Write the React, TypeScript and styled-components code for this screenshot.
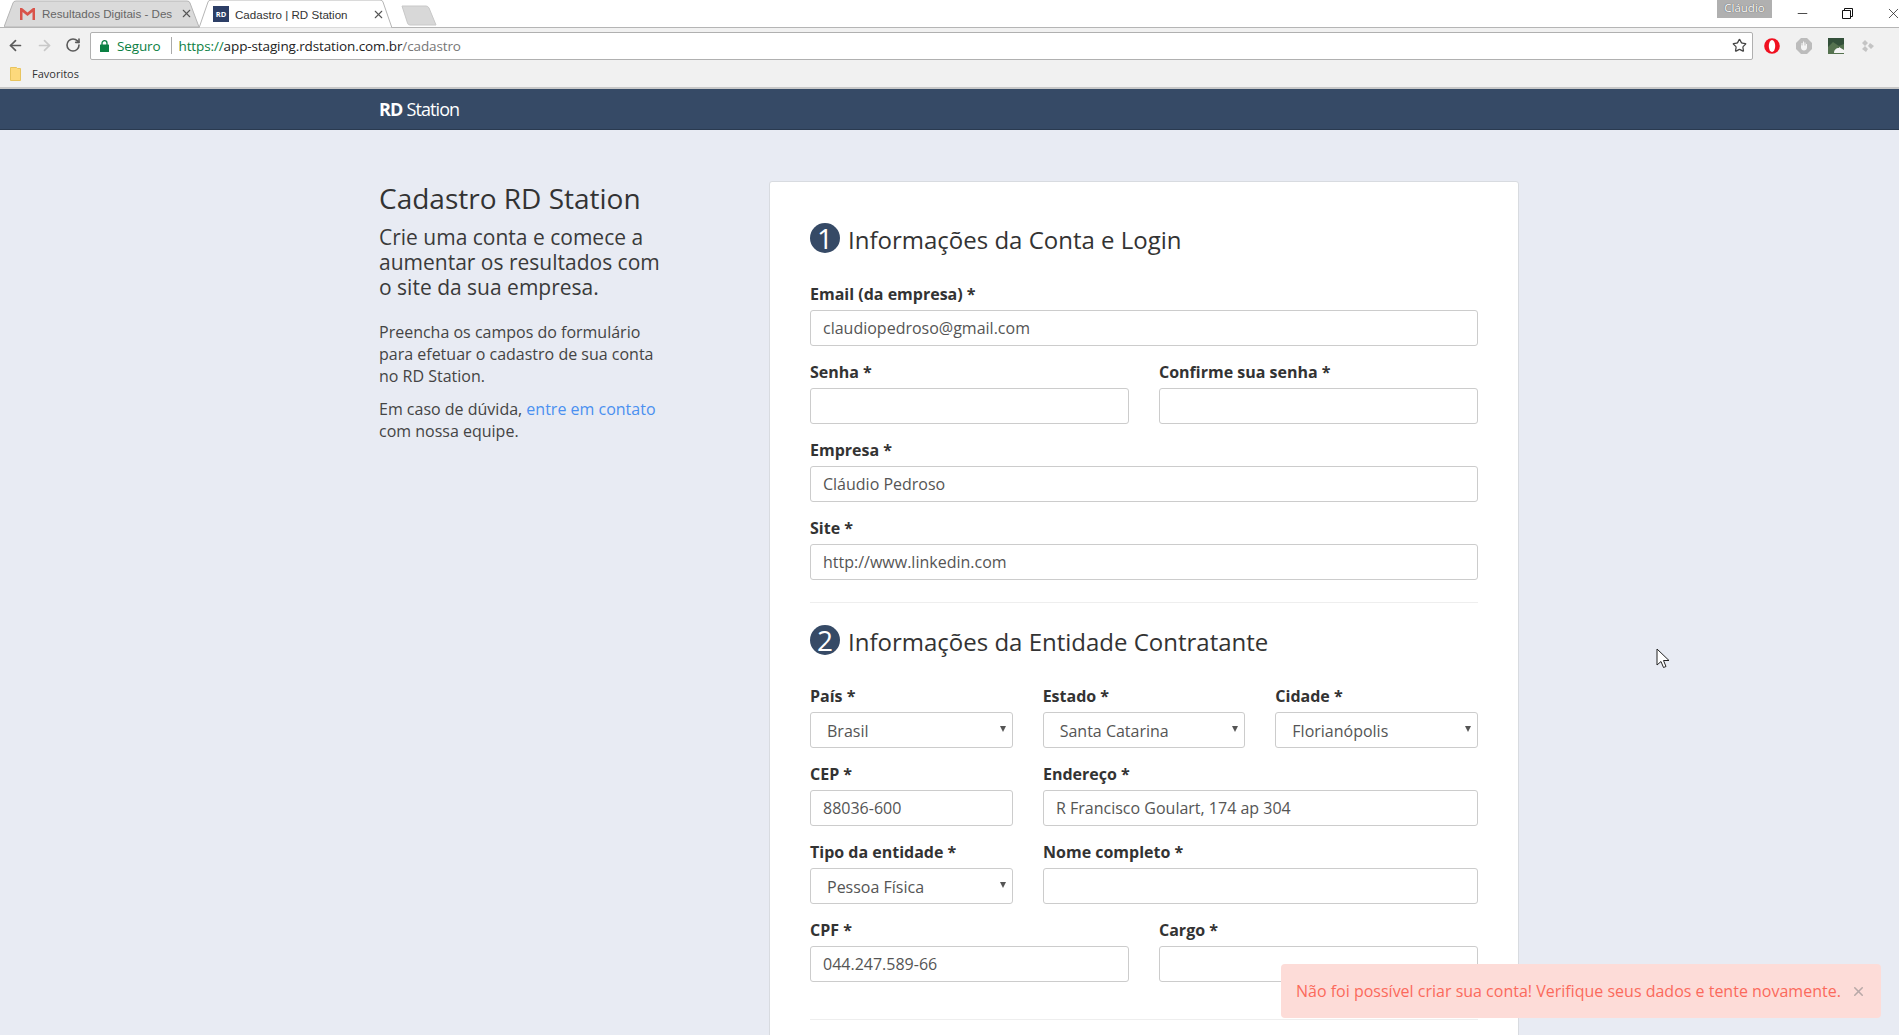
import React from 'react';
import styled, { createGlobalStyle } from 'styled-components';
import { ArrowLeft, ArrowRight, RotateCw, Star, Minus, X } from 'lucide-react';

const GlobalStyle = createGlobalStyle`
  html, body {
    margin: 0;
    height: 100%;
    overflow: hidden;
    background: #e8ebf3;
    font-family: "Open Sans", "Noto Sans", sans-serif;
  }
  * { box-sizing: border-box; }
`;

const TitleBar = styled.div`
  height: 28px;
  background: #fff;
  display: flex;
  align-items: flex-end;
  padding-left: 4px;
  position: relative;
  border-bottom: 1px solid #b5b5b5;
`;

const Tab = styled.div<{ $active?: boolean }>`
  position: relative;
  width: ${p => (p.$active ? 203 : 204)}px;
  margin-right: -9px;
  margin-bottom: ${p => (p.$active ? -1 : 0)}px;
  height: ${p => (p.$active ? 28 : 27)}px;
  display: flex;
  align-items: center;
  padding: 0 ${p => (p.$active ? 17 : 15)}px 0 ${p => (p.$active ? 14 : 16)}px;
  gap: ${p => (p.$active ? 6 : 7)}px;
  font-family: "Liberation Sans", sans-serif;
  font-size: 11.6px;
  color: ${p => (p.$active ? '#333' : '#666')};
  z-index: ${p => (p.$active ? 2 : 1)};
`;

const TabShape = styled.svg`
  position: absolute;
  inset: 0;
  width: 100%;
  height: 100%;
`;

const TabTitle = styled.span`
  position: relative;
  flex: 1;
  overflow: hidden;
  white-space: nowrap;
`;

const TabIcon = styled.svg`
  position: relative;
  flex: none;
`;

const TabClose = styled(X)`
  position: relative;
  flex: none;
  color: #555;
`;

const NewTab = styled.svg`
  width: 36px;
  height: 21px;
  margin-left: 8px;
  margin-bottom: 1px;
  flex: none;
`;

const Profile = styled.div`
  position: absolute;
  top: 0;
  left: 1717px;
  width: 55px;
  height: 18px;
  background: #b0b0b0;
  color: #fff;
  font-size: 11.5px;
  line-height: 16px;
  text-align: center;
  text-shadow: 0 0 1px #333;
`;

const WindowControls = styled.div`
  position: absolute;
  top: 5px;
  left: 1795px;
  display: flex;
  align-items: center;
  gap: 32px;
  color: #111;
`;

const Toolbar = styled.div`
  height: 32px;
  background: #f1f1f1;
  display: flex;
  align-items: center;
  padding: 3px 0 0 7px;
`;

const NavIcons = styled.div`
  display: flex;
  gap: 12px;
  width: 83px;
  flex: none;
`;

const UrlBox = styled.div`
  width: 1663px;
  height: 28px;
  background: #fff;
  border: 1px solid #b0b0b0;
  border-radius: 2px;
  display: flex;
  align-items: center;
  padding: 0 5px 0 9px;
  font-family: "Open Sans", sans-serif;
  font-size: 13.5px;
  letter-spacing: -0.12px;
  white-space: nowrap;
`;

const Secure = styled.span`
  color: #0b8043;
  margin-left: 8px;
`;

const UrlSep = styled.span`
  width: 1px;
  height: 17px;
  background: #aaa;
  margin: 0 7px 0 10px;
`;

const UrlScheme = styled.span`
  color: #0b8043;
`;

const UrlHost = styled.span`
  color: #222;
`;

const UrlPath = styled.span`
  color: #777;
  flex: 1;
`;

const Extensions = styled.div`
  display: flex;
  align-items: center;
  gap: 16px;
  margin-left: 11px;
`;

const Bookmarks = styled.div`
  height: 29px;
  background: #f1f1f1;
  border-bottom: 2px solid #c8c8c8;
  display: flex;
  align-items: center;
  gap: 11px;
  padding-left: 10px;
  font-size: 11px;
  color: #333;
`;

const NavBar = styled.div`
  height: 41px;
  background: #364a66;
  border-bottom: 1px solid #2a3a50;
`;

const NavInner = styled.div`
  width: 1140px;
  margin-left: 379px;
  color: #fff;
  font-size: 18px;
  line-height: 40px;
  letter-spacing: -0.9px;
`;

const LogoBold = styled.b`
  font-weight: 700;
  margin-right: 4px;
`;

const Page = styled.div`
  width: 1140px;
  margin-left: 379px;
  padding-top: 51px;
  display: flex;
`;

const Intro = styled.aside`
  width: 390px;
  flex: none;
  color: #333;
`;

const PageTitle = styled.h1`
  font-size: 28px;
  line-height: 34px;
  font-weight: 400;
  margin: 0 0 10px;
  color: #333;
`;

const Lead = styled.p`
  font-size: 21px;
  line-height: 25.2px;
  margin: 0 0 20px;
  width: 290px;
  color: #3a3a3a;
`;

const Body = styled.p`
  font-size: 16px;
  line-height: 22px;
  margin: 0 0 11px;
  width: 290px;
  color: #444;
`;

const ContactLink = styled.a`
  color: #4a90f0;
  text-decoration: none;
`;

const Card = styled.form`
  flex: 1;
  background: #fff;
  border: 1px solid #d8dbe0;
  border-radius: 3px;
  padding: 41px 40px 0;
  height: 1000px;
`;

const SectionHeading = styled.h2`
  display: flex;
  align-items: center;
  gap: 8px;
  height: 30px;
  margin: 0 0 31px;
  font-size: 24px;
  font-weight: 400;
  color: #333;
`;

const HeadingText = styled.span`
  margin-top: 2px;
`;

const Step = styled.span`
  width: 30px;
  height: 30px;
  border-radius: 50%;
  background: #364a66;
  color: #fff;
  font-size: 28px;
  line-height: 30px;
  text-align: center;
  flex: none;
`;

const Row = styled.div<{ $columns?: string }>`
  display: grid;
  grid-template-columns: ${p => p.$columns || '1fr'};
  column-gap: 30px;
  margin-bottom: 16px;
`;

const Field = styled.div`
  min-width: 0;
`;

const Label = styled.label`
  display: block;
  font-size: 16px;
  line-height: 20px;
  font-weight: 700;
  color: #333;
  margin-bottom: 6px;
`;

const TextInput = styled.input`
  display: block;
  width: 100%;
  height: 36px;
  padding: 0 12px;
  font: 16px "Open Sans", sans-serif;
  color: #555;
  background: #fff;
  border: 1px solid #ccc;
  border-radius: 3px;
  outline: none;
`;

const SelectWrap = styled.div`
  position: relative;

  &::after {
    content: '';
    position: absolute;
    right: 7px;
    top: 14px;
    border-style: solid;
    border-width: 6px 3px 0;
    border-color: #555 transparent transparent;
  }
`;

const Select = styled.select`
  display: block;
  width: 100%;
  height: 36px;
  padding: 2px 16px 0;
  font: 16px "Open Sans", sans-serif;
  color: #555;
  background: #fff;
  border: 1px solid #ccc;
  border-radius: 3px;
  appearance: none;
  outline: none;
`;

const Divider = styled.hr<{ $top?: number }>`
  border: 0;
  border-top: 1px solid #eee;
  margin: ${p => p.$top ?? 22}px 0 22px;
`;

const Toast = styled.div`
  position: fixed;
  left: 1281px;
  top: 964px;
  width: 600px;
  height: 54px;
  background: #fddcd8;
  border-radius: 4px;
  display: flex;
  align-items: center;
  justify-content: space-between;
  padding: 0 15px;
  color: #fb6a5c;
  font-size: 16px;
  white-space: nowrap;
`;

const ToastClose = styled(X)`
  color: #b9a9a8;
  flex: none;
`;

const Cursor = styled.svg`
  position: fixed;
  left: 1656px;
  top: 648px;
`;

const GmailIcon = () => (
  <TabIcon width="15" height="12" viewBox="0 0 15 12">
    <path d="M0 0h2l5.500 4.500L13 0h2v12h-2.500V4L7.500 8 2.500 4v8H0z" fill="#d9534a" />
  </TabIcon>
);

const RdIcon = () => (
  <TabIcon width="16" height="16" viewBox="0 0 16 16">
    <rect width="16" height="16" fill="#2c3e66" />
    <text x="8" y="11" fill="#fff" fontSize="7.5" fontWeight="700" textAnchor="middle" fontFamily="Open Sans">RD</text>
  </TabIcon>
);

const LockIcon = () => (
  <svg width="9" height="12" viewBox="0 0 9 12">
    <path d="M2 5V3.200a2.500 2.500 0 0 1 5 0V5" fill="none" stroke="#0b8043" strokeWidth="1.3" />
    <rect y="4.500" width="9" height="7.500" rx="0.600" fill="#0b8043" />
  </svg>
);

const FolderIcon = () => (
  <svg width="11" height="14" viewBox="0 0 11 14">
    <path d="M0.500 0.500h6l1 1h3v12h-10z" fill="#fdd97c" stroke="#e8c45e" />
  </svg>
);

const RestoreIcon = () => (
  <svg width="11" height="11" viewBox="0 0 11 11" fill="none" stroke="#111">
    <path d="M0.500 2.500h8v8h-8z" />
    <path d="M2.500 2.500v-2h8v8h-2" />
  </svg>
);

const OperaIcon = () => (
  <svg width="16" height="16" viewBox="0 0 16 16">
    <circle cx="8" cy="8" r="7.800" fill="#f01020" />
    <ellipse cx="8" cy="8" rx="3.200" ry="6" fill="#fff" />
  </svg>
);

const BlockIcon = () => (
  <svg width="16" height="16" viewBox="0 0 16 16">
    <path d="M5 0h6l5 5v6l-5 5H5l-5-5V5z" fill="#bcbcbc" />
    <path d="M5 6.500V9.500c0 2 1.500 3 3 3s3-1 3-3V6h-1v1.500h-.5V4.500h-1V7.500h-.5V3.500H7V7.500h-.5V5h-1v3z" fill="#f4f4f4" />
  </svg>
);

const PictureIcon = () => (
  <svg width="16" height="16" viewBox="0 0 16 16">
    <rect width="16" height="16" fill="#55724f" />
    <path d="M0 9l5-5 6 4 5-2V0H0z" fill="#33503a" />
    <path d="M6 15c0-3 2-5 5-5v-1l5 3v3z" fill="#f4f4f4" />
  </svg>
);

const DropboxIcon = () => (
  <svg width="16" height="12" viewBox="-2 0 16 12">
    <path d="M3 0l3 3-3 3 3 3-2 3-4-3 3-3-3-3zM8 3l4 3-3 3-3-3z" fill="#c4c4c4" />
  </svg>
);

const App: React.FC = () => (
  <>
    <GlobalStyle />
    <TitleBar>
      <Tab>
        <TabShape viewBox="0 0 204 27" preserveAspectRatio="none">
          <path d="M0 27L9 3q.5-2 3-2H183q2.500 0 3 2l9 24z" fill="#dadada" stroke="#b5b5b5" />
        </TabShape>
        <GmailIcon />
        <TabTitle>Resultados Digitais - Des</TabTitle>
        <TabClose size={13} strokeWidth={2} />
      </Tab>
      <Tab $active>
        <TabShape viewBox="0 0 203 28" preserveAspectRatio="none">
          <path d="M0 28L9 2q.5-2 3-2H181q2.500 0 3 2l9 26z" fill="#fff" stroke="#b5b5b5" />
        </TabShape>
        <RdIcon />
        <TabTitle>Cadastro | RD Station</TabTitle>
        <TabClose size={13} strokeWidth={2} />
      </Tab>
      <NewTab viewBox="0 0 36 21">
        <path d="M1 1h24q2 0 3 2l7 17H9q-2 0-2.500-2z" fill="#d8d8d8" stroke="#c8c8c8" />
      </NewTab>
      <Profile>Cláudio</Profile>
      <WindowControls>
        <Minus size={15} strokeWidth={1.2} />
        <RestoreIcon />
        <X size={17} strokeWidth={1} />
      </WindowControls>
    </TitleBar>
    <Toolbar>
      <NavIcons>
        <ArrowLeft size={17} color="#5a5a5a" strokeWidth={2.4} />
        <ArrowRight size={17} color="#c8c8c8" strokeWidth={2.4} />
        <RotateCw size={16} color="#5a5a5a" strokeWidth={2.4} />
      </NavIcons>
      <UrlBox>
        <LockIcon />
        <Secure>Seguro</Secure>
        <UrlSep />
        <UrlScheme>https://</UrlScheme>
        <UrlHost>app-staging.rdstation.com.br</UrlHost>
        <UrlPath>/cadastro</UrlPath>
        <Star size={15} color="#444" strokeWidth={2} />
      </UrlBox>
      <Extensions>
        <OperaIcon />
        <BlockIcon />
        <PictureIcon />
        <DropboxIcon />
      </Extensions>
    </Toolbar>
    <Bookmarks>
      <FolderIcon />
      Favoritos
    </Bookmarks>
    <NavBar>
      <NavInner>
        <LogoBold>RD</LogoBold>Station
      </NavInner>
    </NavBar>
    <Page>
      <Intro>
        <PageTitle>Cadastro RD Station</PageTitle>
        <Lead>Crie uma conta e comece a aumentar os resultados com o site da sua empresa.</Lead>
        <Body>Preencha os campos do formulário para efetuar o cadastro de sua conta no RD Station.</Body>
        <Body>
          Em caso de dúvida, <ContactLink href="#">entre em contato</ContactLink> com nossa equipe.
        </Body>
      </Intro>
      <Card>
        <SectionHeading>
          <Step>1</Step>
          <HeadingText>Informações da Conta e Login</HeadingText>
        </SectionHeading>
        <Row>
          <Field>
            <Label>Email (da empresa) *</Label>
            <TextInput defaultValue="claudiopedroso@gmail.com" />
          </Field>
        </Row>
        <Row $columns="1fr 1fr">
          <Field>
            <Label>Senha *</Label>
            <TextInput />
          </Field>
          <Field>
            <Label>Confirme sua senha *</Label>
            <TextInput />
          </Field>
        </Row>
        <Row>
          <Field>
            <Label>Empresa *</Label>
            <TextInput defaultValue="Cláudio Pedroso" />
          </Field>
        </Row>
        <Row>
          <Field>
            <Label>Site *</Label>
            <TextInput defaultValue="http://www.linkedin.com" />
          </Field>
        </Row>
        <Divider />
        <SectionHeading>
          <Step>2</Step>
          <HeadingText>Informações da Entidade Contratante</HeadingText>
        </SectionHeading>
        <Row $columns="1fr 1fr 1fr">
          <Field>
            <Label>País *</Label>
            <SelectWrap>
              <Select defaultValue="Brasil">
                <option>Brasil</option>
              </Select>
            </SelectWrap>
          </Field>
          <Field>
            <Label>Estado *</Label>
            <SelectWrap>
              <Select defaultValue="Santa Catarina">
                <option>Santa Catarina</option>
              </Select>
            </SelectWrap>
          </Field>
          <Field>
            <Label>Cidade *</Label>
            <SelectWrap>
              <Select defaultValue="Florianópolis">
                <option>Florianópolis</option>
              </Select>
            </SelectWrap>
          </Field>
        </Row>
        <Row $columns="203px 1fr">
          <Field>
            <Label>CEP *</Label>
            <TextInput defaultValue="88036-600" />
          </Field>
          <Field>
            <Label>Endereço *</Label>
            <TextInput defaultValue="R Francisco Goulart, 174 ap 304" />
          </Field>
        </Row>
        <Row $columns="203px 1fr">
          <Field>
            <Label>Tipo da entidade *</Label>
            <SelectWrap>
              <Select defaultValue="Pessoa Física">
                <option>Pessoa Física</option>
              </Select>
            </SelectWrap>
          </Field>
          <Field>
            <Label>Nome completo *</Label>
            <TextInput />
          </Field>
        </Row>
        <Row $columns="1fr 1fr">
          <Field>
            <Label>CPF *</Label>
            <TextInput defaultValue="044.247.589-66" />
          </Field>
          <Field>
            <Label>Cargo *</Label>
            <TextInput />
          </Field>
        </Row>
        <Divider $top={37} />
      </Card>
    </Page>
    <Toast>
      Não foi possível criar sua conta! Verifique seus dados e tente novamente.
      <ToastClose size={15} strokeWidth={2.5} />
    </Toast>
    <Cursor width="14" height="22" viewBox="0 0 14 22">
      <path d="M1 1v16l4-3.500 2.500 6 2.500-1-2.500-6H13z" fill="#fff" stroke="#222" strokeWidth="1" />
    </Cursor>
  </>
);

export default App;
